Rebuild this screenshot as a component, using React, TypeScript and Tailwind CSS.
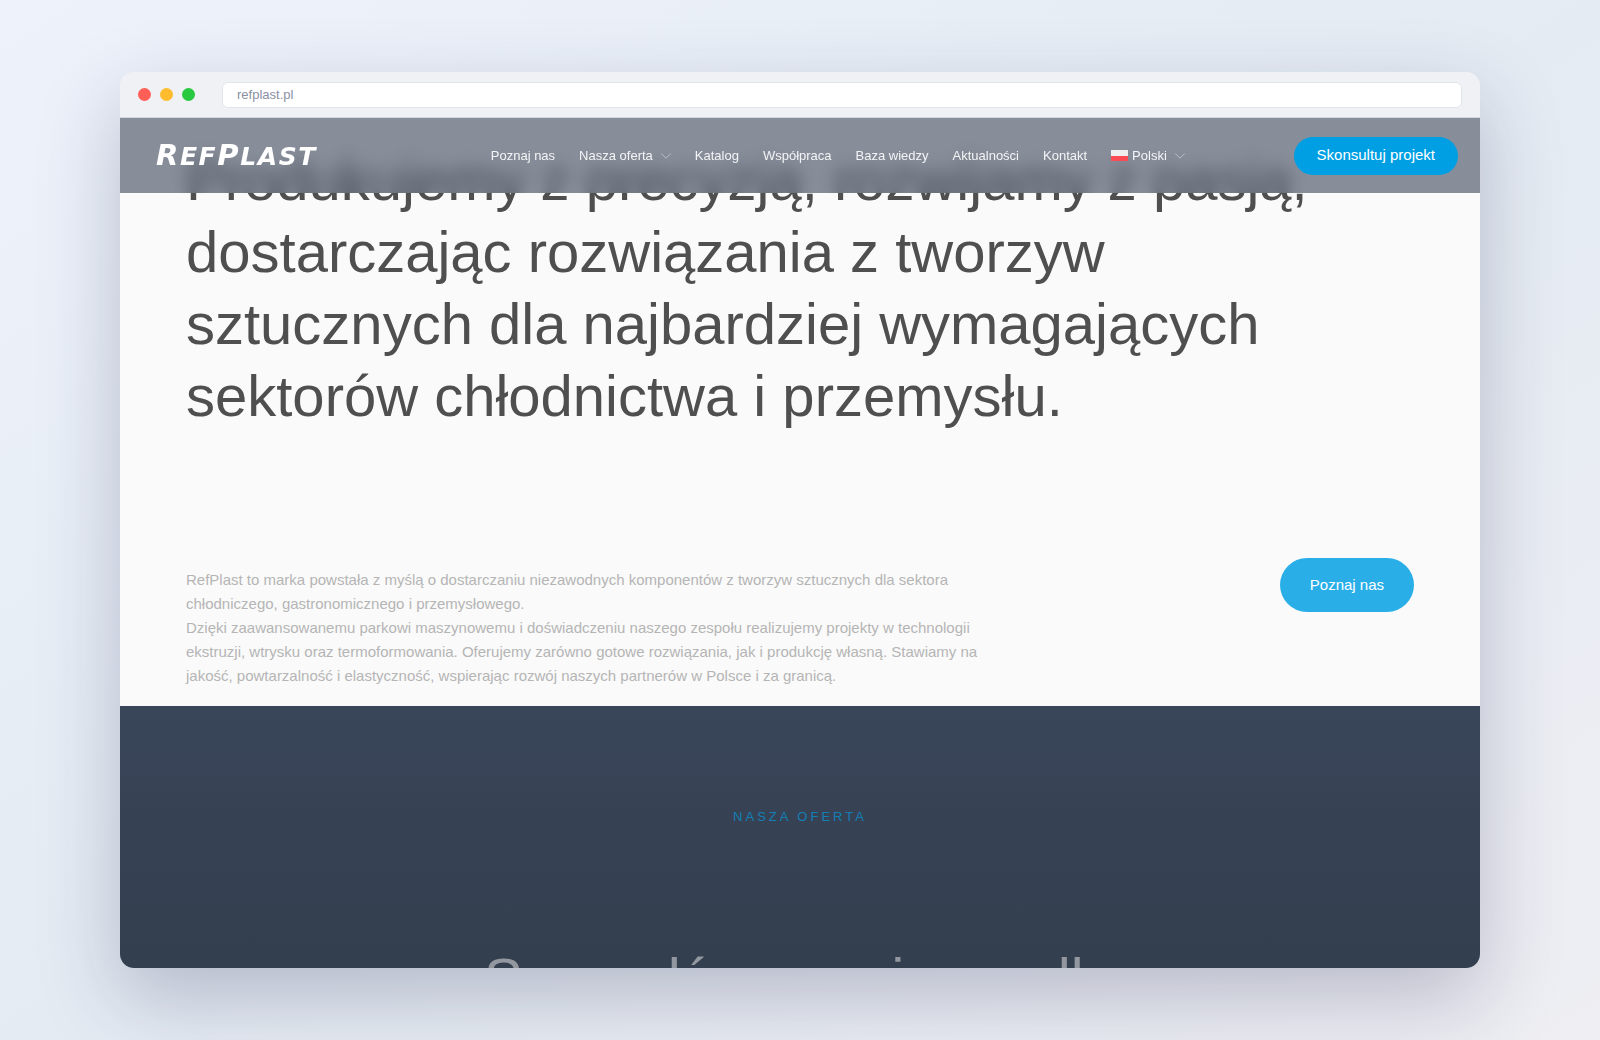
// =============================================
// RefPlast: strona główna w oknie przeglądarki
// =============================================
import { ChevronDown } from 'lucide-react';

// ── Menu ─────────────────────────────────────────────────────────────────────
interface NavItem { label: string; flag?: boolean; submenu?: boolean }

const NAV_ITEMS: NavItem[] = [
  { label: 'Poznaj nas' },
  { label: 'Nasza oferta', submenu: true },
  { label: 'Katalog' },
  { label: 'Współpraca' },
  { label: 'Baza wiedzy' },
  { label: 'Aktualności' },
  { label: 'Kontakt' },
  { label: 'Polski', flag: true, submenu: true },
];

function PolishFlag() {
  return (
    <span className="flex flex-col w-[17px] h-[11px] mr-1" aria-hidden="true">
      <span className="flex-1 bg-[#efeff0]" />
      <span className="flex-1 bg-[#fb4b55]" />
    </span>
  );
}

function Logo() {
  return (
    <a
      href="#"
      className="w-[226px] shrink-0 flex items-baseline text-white font-bold italic leading-none tracking-widest font-['DejaVu_Sans',sans-serif]">
      <span className="text-[29px]">R</span>
      <span className="text-[25px]">EF</span>
      <span className="text-[29px]">P</span>
      <span className="text-[25px]">LAST</span>
    </a>
  );
}

function Navbar() {
  return (
    <header className="absolute inset-x-0 top-0 z-10">
      {/* Kilka słabych rozmyć zamiast jednego: równa krawędź na dole paska */}
      <div className="absolute inset-0 backdrop-blur-[5px]" />
      <div className="absolute inset-0 backdrop-blur-[5px]" />
      <div className="absolute inset-0 backdrop-blur-[5px]" />
      <div className="absolute inset-0 backdrop-blur-[5px]" />
      <div className="absolute inset-0 bg-[#3a4459]/60" />
      <div className="relative h-[75px] pl-9 pr-[22px] flex items-center justify-between">
        <Logo />
        <nav className="flex items-center gap-6 text-[13px] leading-5 text-white/90 whitespace-nowrap">
          {NAV_ITEMS.map(item => (
            <a key={item.label} href="#" className="flex items-center">
              {item.flag && <PolishFlag />}
              {item.label}
              {item.submenu && <ChevronDown className="w-[18px] h-[18px] ml-1 -mr-1 text-white/60" strokeWidth={1} />}
            </a>
          ))}
        </nav>
        <button className="h-[38px] px-[23px] rounded-full bg-[#009fe3] text-white text-[15px] whitespace-nowrap">
          Skonsultuj projekt
        </button>
      </div>
    </header>
  );
}

// ── Pasek okna ───────────────────────────────────────────────────────────────
function BrowserBar() {
  return (
    <div className="h-[46px] shrink-0 flex items-center px-[18px] bg-[#f0f1f5] border-b border-[#d5d8e2]">
      <div className="flex gap-[9px] mr-[27px]">
        <span className="w-[13px] h-[13px] rounded-full bg-[#ff5f57]" />
        <span className="w-[13px] h-[13px] rounded-full bg-[#febc2e]" />
        <span className="w-[13px] h-[13px] rounded-full bg-[#28c840]" />
      </div>
      <input
        type="text"
        aria-label="Adres strony"
        defaultValue="refplast.pl"
        className="flex-1 min-w-0 h-[26px] px-3.5 rounded-md bg-white border border-[#e3e5ec] text-[13px] text-[#8a8fa3] outline-none"
      />
    </div>
  );
}

// ── Sekcje ───────────────────────────────────────────────────────────────────
function Intro() {
  return (
    <section className="px-[66px] pt-[26px] pb-[18px] bg-[#fafafa]">
      <h1 className="max-w-[1150px] text-[58px] leading-[72px] text-[#4f4f4f]">
        Produkujemy z precyzją, rozwijamy z pasją, dostarczając rozwiązania z tworzyw
        sztucznych dla najbardziej wymagających sektorów chłodnictwa i przemysłu.
      </h1>
      <div className="mt-[126px] flex items-start justify-between">
        <p className="pt-[10px] max-w-[820px] text-[15px] leading-6 text-[#b5b5b5]">
          RefPlast to marka powstała z myślą o dostarczaniu niezawodnych komponentów z tworzyw
          sztucznych dla sektora chłodniczego, gastronomicznego i przemysłowego.
          <br />
          Dzięki zaawansowanemu parkowi maszynowemu i doświadczeniu naszego zespołu realizujemy
          projekty w technologii ekstruzji, wtrysku oraz termoformowania. Oferujemy zarówno gotowe
          rozwiązania, jak i produkcję własną. Stawiamy na jakość, powtarzalność i elastyczność,
          wspierając rozwój naszych partnerów w Polsce i za granicą.
        </p>
        <button className="h-[54px] px-[30px] rounded-full bg-[#29aee8] text-white text-[15px] whitespace-nowrap">
          Poznaj nas
        </button>
      </div>
    </section>
  );
}

function Offer() {
  return (
    <section className="flex-1 pt-[101px] px-[66px] text-center bg-linear-to-b from-[#394559] to-[#323d4c]">
      <p className="text-[13px] leading-5 tracking-[3px] text-[#137fb5]">NASZA OFERTA</p>
      <h2 className="mt-[116px] text-[58px] leading-[72px] text-[#9297a0]">
        Sprawdź co możemy dla
      </h2>
    </section>
  );
}

export default function App() {
  return (
    <div
      className="h-screen flex flex-col px-[120px] py-[72px] font-['Liberation_Sans',Arial,sans-serif]
        bg-linear-to-br from-[#eef2fb] via-[#e4ebf3] to-[#eeeef3]">
      <main className="flex-1 min-h-0 flex flex-col rounded-[14px] overflow-hidden shadow-[0_30px_80px_rgba(35,40,80,0.25)]">
        <BrowserBar />
        <div className="relative flex-1 min-h-0 flex flex-col overflow-hidden">
          <Navbar />
          <Intro />
          <Offer />
        </div>
      </main>
    </div>
  );
}
